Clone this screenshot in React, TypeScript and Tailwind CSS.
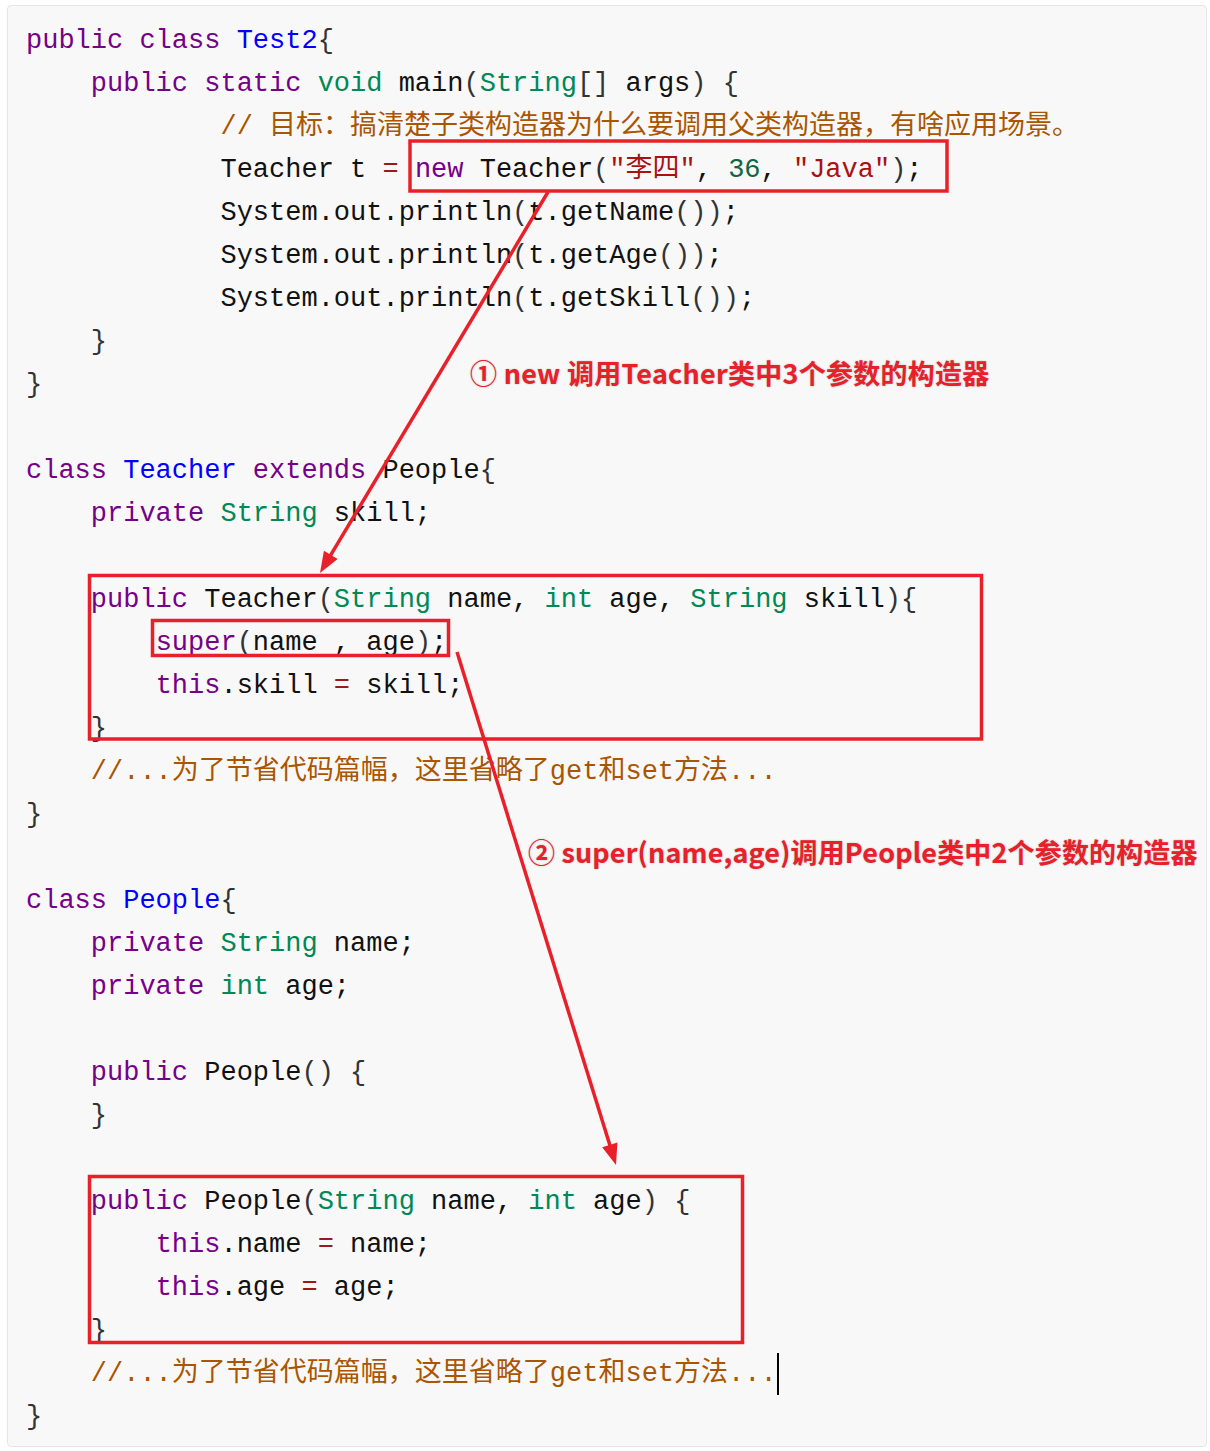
import React from "react";

type Tok = [string, string?];

const K = "text-[#770088]";
const D = "text-[#0000ff]";
const T = "text-[#008855]";
const C = "text-[#aa5500]";
const S = "text-[#aa1111]";
const N = "text-[#116644]";
const O = "text-[#981a1a]";
const P = "text-[#333333]";

const omit = "//...为了节省代码篇幅，这里省略了get和set方法...";

const lines: Tok[][] = [
  [["public", K], [" "], ["class", K], [" "], ["Test2", D], ["{", P]],
  [["    "], ["public", K], [" "], ["static", K], [" "], ["void", T], [" main"], ["(", P], ["String", T], ["[]", P], [" args"], [")", P], [" "], ["{", P]],
  [["            "], ["// 目标：搞清楚子类构造器为什么要调用父类构造器，有啥应用场景。", C]],
  [["            Teacher t "], ["=", O], [" "], ["new", K], [" Teacher"], ["(", P], ["\"李四\"", S], [", "], ["36", N], [", "], ["\"Java\"", S], [")", P], [";"]],
  [["            System.out.println"], ["(", P], ["t.getName"], ["()", P], [")", P], [";"]],
  [["            System.out.println"], ["(", P], ["t.getAge"], ["()", P], [")", P], [";"]],
  [["            System.out.println"], ["(", P], ["t.getSkill"], ["()", P], [")", P], [";"]],
  [["    "], ["}", P]],
  [["}", P]],
  [],
  [["class", K], [" "], ["Teacher", D], [" "], ["extends", K], [" People"], ["{", P]],
  [["    "], ["private", K], [" "], ["String", T], [" skill;"]],
  [],
  [["    "], ["public", K], [" Teacher"], ["(", P], ["String", T], [" name, "], ["int", T], [" age, "], ["String", T], [" skill"], [")", P], ["{", P]],
  [["        "], ["super", K], ["(", P], ["name , age"], [")", P], [";"]],
  [["        "], ["this", K], [".skill "], ["=", O], [" skill;"]],
  [["    "], ["}", P]],
  [["    "], [omit, C]],
  [["}", P]],
  [],
  [["class", K], [" "], ["People", D], ["{", P]],
  [["    "], ["private", K], [" "], ["String", T], [" name;"]],
  [["    "], ["private", K], [" "], ["int", T], [" age;"]],
  [],
  [["    "], ["public", K], [" People"], ["()", P], [" "], ["{", P]],
  [["    "], ["}", P]],
  [],
  [["    "], ["public", K], [" People"], ["(", P], ["String", T], [" name, "], ["int", T], [" age"], [")", P], [" "], ["{", P]],
  [["        "], ["this", K], [".name "], ["=", O], [" name;"]],
  [["        "], ["this", K], [".age "], ["=", O], [" age;"]],
  [["    "], ["}", P]],
  [["    "], [omit, C]],
  [["}", P]],
];

const RED = "#e8202a";

function Arrow({ x1, y1, x2, y2 }: { x1: number; y1: number; x2: number; y2: number }) {
  const dx = x2 - x1;
  const dy = y2 - y1;
  const len = Math.hypot(dx, dy);
  const ux = dx / len;
  const uy = dy / len;
  const bx = x2 - ux * 21;
  const by = y2 - uy * 21;
  const w = 8;
  return (
    <g>
      <line x1={x1} y1={y1} x2={bx + ux * 2} y2={by + uy * 2} stroke={RED} strokeWidth={3.5} />
      <polygon
        points={`${x2},${y2} ${bx - uy * w},${by + ux * w} ${bx + uy * w},${by - ux * w}`}
        fill={RED}
      />
    </g>
  );
}

export default function App() {
  return (
    <div className="relative h-[1451px] w-[1210px] bg-white">
      <div className="ml-[7px] pt-[5px]">
        <div className="w-[1200px] rounded-[4px] border border-[#e3e6ea] bg-[#f8f8f8] pb-[7px] pl-[18px] pt-[14px] font-['Liberation_Mono','Noto_Sans_CJK_SC',monospace] text-[27px] text-[#111]">
          {lines.map((line, i) => (
            <div key={i} className="h-[43px] whitespace-pre leading-[43px]">
              {line.map(([text, cls], j) => (
                <span key={j} className={cls}>
                  {text}
                </span>
              ))}
              {i === 31 && <span className="inline-block h-[42px] w-[2px] bg-black align-middle" />}
            </div>
          ))}
        </div>
      </div>

      <svg className="absolute left-0 top-0" width={1210} height={1451}>
        <rect x={410} y={141} width={537} height={50} fill="none" stroke={RED} strokeWidth={3.5} />
        <rect x={89.5} y={575.5} width={892} height={163.5} fill="none" stroke={RED} strokeWidth={3.5} />
        <rect x={152.5} y={620.5} width={296} height={35} fill="none" stroke={RED} strokeWidth={3.5} />
        <rect x={89.5} y={1176.5} width={653} height={166} fill="none" stroke={RED} strokeWidth={3.5} />
        <Arrow x1={548} y1={192} x2={320} y2={573} />
        <Arrow x1={457} y1={652} x2={616} y2={1165} />
      </svg>

      <div className="absolute left-[470px] top-[355px] whitespace-nowrap font-['Noto_Sans_CJK_SC',sans-serif] text-[27px] font-bold leading-[36px] tracking-[0.25px] text-[#e8202a] [text-shadow:0_0_2px_rgba(0,0,0,0.25)]">
        ① new 调用Teacher类中3个参数的构造器
      </div>
      <div className="absolute left-[528px] top-[834px] whitespace-nowrap font-['Noto_Sans_CJK_SC',sans-serif] text-[27px] font-bold leading-[36px] tracking-[0.15px] text-[#e8202a] [text-shadow:0_0_2px_rgba(0,0,0,0.25)]">
        ② super(name,age)调用People类中2个参数的构造器
      </div>
    </div>
  );
}
